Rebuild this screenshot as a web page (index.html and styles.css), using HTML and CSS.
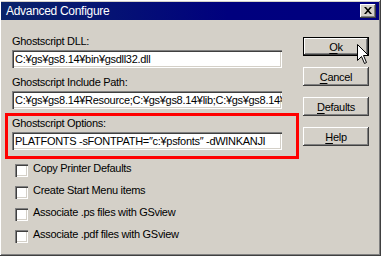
FILE: index.html
```html
<!DOCTYPE html>
<html>
<head>
<meta charset="utf-8">
<link rel="stylesheet" href="styles.css">
</head>
<body>
<div class="window">
  <div class="titlebar">
    <span class="title">Advanced Configure</span>
    <div class="close">
      <svg width="8" height="7" viewBox="0 0 8 7"><path d="M0 0h2l2 2.2L6 0h2L5 3.5 8 7H6L4 4.8 2 7H0l3-3.5z" fill="#000"/></svg>
    </div>
  </div>
  <div class="content">
    <div class="left">
      <div class="field">
        <div class="label">Ghostscript DLL:</div>
        <div class="input">C:¥gs¥gs8.14¥bin¥gsdll32.dll</div>
      </div>
      <div class="field">
        <div class="label">Ghostscript Include Path:</div>
        <div class="input">C:¥gs¥gs8.14¥Resource;C:¥gs¥gs8.14¥lib;C:¥gs¥gs8.14¥Resource</div>
      </div>
      <div class="field">
        <div class="label">Ghostscript Options:</div>
        <div class="input">PLATFONTS -sFONTPATH=″c:¥psfonts″ -dWINKANJI</div>
      </div>
      <div class="checks">
        <div class="check"><span class="box"></span><span class="ctext">Copy Printer Defaults</span></div>
        <div class="check"><span class="box"></span><span class="ctext">Create Start Menu items</span></div>
        <div class="check"><span class="box"></span><span class="ctext">Associate .ps files with GSview</span></div>
        <div class="check"><span class="box"></span><span class="ctext">Associate .pdf files with GSview</span></div>
      </div>
    </div>
    <div class="right">
      <div class="btn default"><span><u>O</u>k</span></div>
      <div class="btn"><span><u>C</u>ancel</span></div>
      <div class="btn"><span><u>D</u>efaults</span></div>
      <div class="btn"><span><u>H</u>elp</span></div>
    </div>
  </div>
  <div class="highlight"></div>
  <svg class="cursor" width="12" height="20" viewBox="0 0 12 20">
    <path d="M0.5 0.5 V16.5 L4.5 12.5 L7.5 19.5 L9.5 18.5 L6.5 11.5 H11.5 Z" fill="#fff" stroke="#000" stroke-width="1"/>
  </svg>
</div>
</body>
</html>
```
FILE: styles.css
```css
html, body {
  margin: 0;
  padding: 0;
  background: #d4d0c8;
}
.window {
  position: relative;
  width: 381px;
  height: 256px;
  box-sizing: border-box;
  background: #d4d0c8;
  box-shadow: inset -1px -1px 0 #404040, inset 1px 1px 0 #fff, inset -2px -2px 0 #808080;
  font-family: "Liberation Sans", Arial, sans-serif;
  font-size: 11px;
  letter-spacing: -0.3px;
  color: #000;
  overflow: hidden;
}
.titlebar {
  margin: 2px 2px 0 1px;
  height: 18px;
  background: linear-gradient(to right, #0a246a, #00007e 60%, #000080);
  display: flex;
  align-items: center;
  justify-content: space-between;
}
.title {
  color: #fff;
  font-size: 12px;
  line-height: 18px;
  padding-left: 5px;
}
.close {
  width: 16px;
  height: 14px;
  margin-right: 3px;
  box-sizing: border-box;
  background: #d4d0c8;
  box-shadow: inset -1px -1px 0 #404040, inset 1px 1px 0 #fff, inset -2px -2px 0 #808080;
  display: flex;
  align-items: center;
  justify-content: center;
}
.close svg { display: block; margin-top: -1px; margin-left: -1px; }
.content {
  display: flex;
  padding-top: 14px;
}
.left {
  margin-left: 12px;
  width: 270px;
}
.field {
  margin-bottom: 7px;
}
.label {
  line-height: 14px;
  height: 14px;
  margin-bottom: 2px;
  white-space: nowrap;
}
.input {
  height: 18px;
  box-sizing: border-box;
  background: #fff;
  box-shadow: inset 1px 1px 0 #808080, inset 2px 2px 0 #404040, inset -1px -1px 0 #fff, inset -2px -2px 0 #d4d0c8;
  padding: 2px 2px 2px 3px;
  line-height: 15px;
  white-space: nowrap;
  overflow: hidden;
}
.checks {
  margin-top: 14px;
  display: flex;
  flex-direction: column;
  gap: 9px;
}
.check {
  display: flex;
  align-items: flex-start;
  height: 13px;
  white-space: nowrap;
}
.ctext {
  line-height: 13px;
  margin-top: -2px;
}
.box {
  width: 13px;
  height: 13px;
  margin-left: 3px;
  margin-right: 5px;
  box-sizing: border-box;
  background: #fff;
  box-shadow: inset 1px 1px 0 #808080, inset 2px 2px 0 #404040, inset -1px -1px 0 #fff, inset -2px -2px 0 #d4d0c8;
  flex: none;
}
.right {
  margin-left: 21px;
  padding-top: 3px;
  display: flex;
  flex-direction: column;
  gap: 11px;
}
.btn {
  width: 66px;
  height: 19px;
  box-sizing: border-box;
  background: #d4d0c8;
  box-shadow: inset -1px -1px 0 #404040, inset 1px 1px 0 #fff, inset -2px -2px 0 #808080;
  display: flex;
  align-items: center;
  justify-content: center;
  line-height: 14px;
}
.btn u { text-underline-offset: 2px; }
.btn.default {
  box-shadow: inset 0 0 0 1px #000, inset -2px -2px 0 #404040, inset 2px 2px 0 #fff, inset -3px -3px 0 #808080;
}
.highlight {
  position: absolute;
  left: 5px;
  top: 113px;
  width: 294px;
  height: 46px;
  box-sizing: border-box;
  border: 3px solid #ff0000;
}
.cursor {
  position: absolute;
  left: 357px;
  top: 44px;
}
```
